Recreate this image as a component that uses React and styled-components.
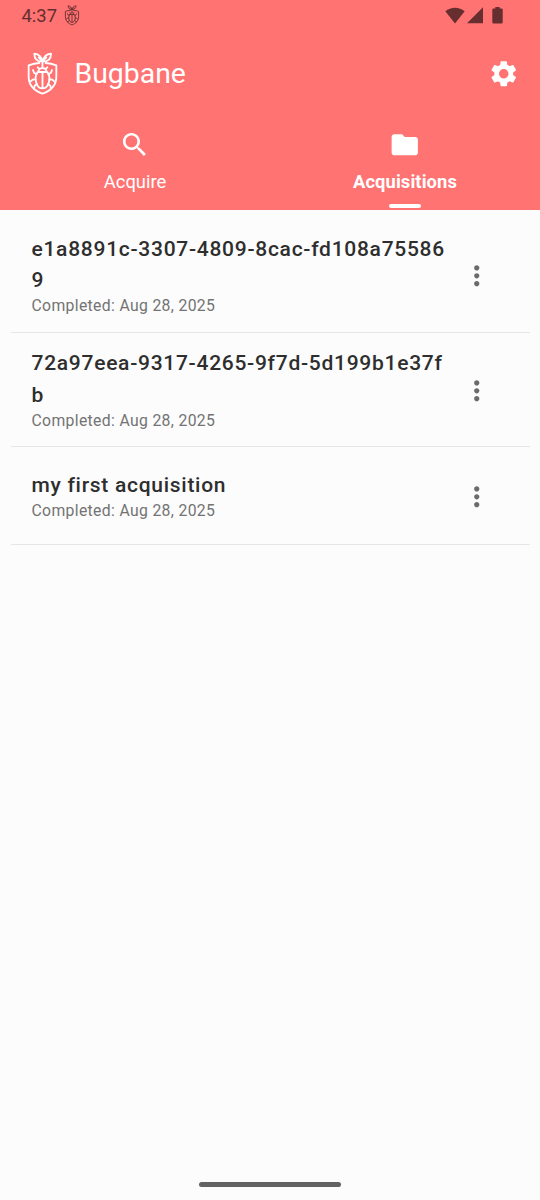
import React from "react";
import styled, { createGlobalStyle } from "styled-components";

const GlobalStyle = createGlobalStyle`
  * { box-sizing: border-box; }
  body {
    margin: 0;
    background: #fcfcfc;
    font-family: Roboto, "Liberation Sans", sans-serif;
  }
`;

const Screen = styled.div`
  display: flex;
  flex-direction: column;
  width: 540px;
  height: 1200px;
  background: #fcfcfc;
  overflow: hidden;
`;

const Header = styled.header`
  display: flex;
  flex-direction: column;
  height: 210px;
  background: #ff7373;
  color: #fff;
`;

const StatusBar = styled.div`
  display: flex;
  align-items: center;
  justify-content: space-between;
  height: 31px;
  padding: 0 37px 0 21.5px;
  color: #662e2e;
`;

const StatusGroup = styled.div`
  display: flex;
  align-items: center;
  gap: ${(p) => p.$gap}px;
`;

const Clock = styled.span`
  font-size: 18.4px;
  line-height: 31px;
`;

const BatterySlot = styled.span`
  display: flex;
  margin-left: 7.5px;
`;

const AppBar = styled.div`
  display: flex;
  align-items: center;
  height: 85px;
  padding: 0 21px 0 26px;
`;

const AppTitle = styled.h1`
  flex: 1;
  margin: 0 0 0 15.5px;
  font-size: 28.4px;
  font-weight: 400;
  line-height: 36px;
`;

const IconButton = styled.button`
  display: flex;
  padding: 0;
  border: 0;
  background: none;
  color: ${(p) => p.$color};
`;

const Tabs = styled.nav`
  display: flex;
  flex: 1;
`;

const Tab = styled.button`
  display: flex;
  flex: 1;
  flex-direction: column;
  align-items: center;
  padding: 13px 0 0;
  border: 0;
  background: none;
  color: #fff;
  font-family: inherit;
  font-size: 18.375px;
  font-weight: ${(p) => (p.$active ? 700 : 400)};
  line-height: 26px;
  letter-spacing: ${(p) => (p.$active ? 0.1 : 0)}px;
`;

const TabLabel = styled.span`
  margin-top: 8px;
`;

const Indicator = styled.span`
  width: 32px;
  height: 4px;
  margin-top: 9.5px;
  border-radius: 2px;
  background: #fff;
`;

const List = styled.ul`
  flex: 1;
  margin: 0;
  padding: 8.6px 10.5px 0;
  list-style: none;
`;

const Row = styled.li`
  display: flex;
  align-items: center;
  min-height: 98px;
  padding: 15.4px 36.8px 14px 21px;
  border-bottom: 1.3px solid #e6e6e6;
`;

const RowText = styled.div`
  flex: 1;
  min-width: 0;
  padding-right: 12px;
`;

const RowTitle = styled.div`
  color: #2e2e2e;
  font-size: 21px;
  font-weight: 500;
  line-height: 31.5px;
  letter-spacing: 0.72px;
  word-break: break-all;
`;

const RowDate = styled.div`
  margin: -1.8px 0 1.8px;
  color: #737373;
  font-size: 15.75px;
  line-height: 21px;
  letter-spacing: 0.34px;
`;

const HomeArea = styled.footer`
  display: flex;
  justify-content: center;
  height: 18px;
`;

const HomeHandle = styled.div`
  width: 142px;
  height: 5px;
  border-radius: 2.5px;
  background: #636363;
`;

const MaterialIcon = ({ d }) => (
  <svg width="31.5" height="31.5" viewBox="0 0 24 24" fill="currentColor">
    <path d={d} />
  </svg>
);

const paths = {
  settings:
    "M19.14 12.94c.04-.3.06-.61.06-.94 0-.32-.02-.64-.07-.94l2.03-1.58c.18-.14.23-.41.12-.61l-1.92-3.32c-.12-.22-.37-.29-.59-.22l-2.39.96c-.5-.38-1.03-.7-1.62-.94l-.36-2.54c-.04-.24-.24-.41-.48-.41h-3.84c-.24 0-.43.17-.47.41l-.36 2.54c-.59.24-1.13.57-1.62.94l-2.39-.96c-.22-.08-.47 0-.59.22L2.74 8.87c-.12.21-.08.47.12.61l2.03 1.58c-.05.3-.09.63-.09.94s.02.64.07.94l-2.03 1.58c-.18.14-.23.41-.12.61l1.92 3.32c.12.22.37.29.59.22l2.39-.96c.5.38 1.03.7 1.62.94l.36 2.54c.05.24.24.41.48.41h3.84c.24 0 .44-.17.47-.41l.36-2.54c.59-.24 1.13-.56 1.62-.94l2.39.96c.22.08.47 0 .59-.22l1.92-3.32c.12-.22.07-.47-.12-.61l-2.01-1.58zM12 15.6c-1.98 0-3.6-1.62-3.6-3.6s1.62-3.6 3.6-3.6 3.6 1.62 3.6 3.6-1.62 3.6-3.6 3.6z",
  search:
    "M15.5 14h-.79l-.28-.27C15.41 12.59 16 11.11 16 9.5 16 5.91 13.09 3 9.5 3S3 5.91 3 9.5 5.91 16 9.5 16c1.61 0 3.09-.59 4.23-1.57l.27.28v.79l5 4.99L20.49 19l-4.99-5zm-6 0C7.01 14 5 11.99 5 9.5S7.01 5 9.5 5 14 7.01 14 9.5 11.99 14 9.5 14z",
  folder:
    "M10 4H4c-1.1 0-1.99.9-1.99 2L2 18c0 1.1.9 2 2 2h16c1.1 0 2-.9 2-2V8c0-1.1-.9-2-2-2h-8l-2-2z",
  more:
    "M12 8c1.1 0 2-.9 2-2s-.9-2-2-2-2 .9-2 2 .9 2 2 2zm0 2c-1.1 0-2 .9-2 2s.9 2 2 2 2-.9 2-2-.9-2-2-2zm0 6c-1.1 0-2 .9-2 2s.9 2 2 2 2-.9 2-2-.9-2-2-2z",
};

const BugLogo = ({ width, height, stroke }) => (
  <svg
    width={width}
    height={height}
    viewBox="0 0 99 132"
    fill="none"
    stroke="currentColor"
    strokeWidth={stroke}
    strokeLinecap="round"
    strokeLinejoin="round"
  >
    <path d="M40 33Q24 34 8 40v34c0 26 17 42 41.500 51C74 116 91 100 91 74V40Q75 34 59 33" />
    <path d="M49.500 46V29C46 12 36 6 25 5c0 15 8 24 24.500 24C53 12 63 6 75 5c0 15-9 24-25.500 24M38 16l11.500 13L61 16" />
    <path d="M37 59c2-14 23-14 25 0M35 60h29c13 18 4 49-14.500 49S22 78 35 60ZM49.500 62v46M35 46l6 5M64 46l-6 5" />
    <path d="M32 67 24 62 21 54M67 67l8-5 3-8M29 82l-9 1-7 6M70 82l9 1 7 6M33 96l-7 5-2 9M66 96l7 5 2 9" />
  </svg>
);

const WifiIcon = () => (
  <svg width="20" height="17" viewBox="0 0 20 17" fill="currentColor">
    <path d="M.3 4.300C5.800-.6 14.200-.6 19.700 4.300L10 16.500Z" />
  </svg>
);

const SignalIcon = () => (
  <svg width="16" height="17" viewBox="0 0 16 17" fill="currentColor">
    <path d="M16 .3v16H0z" />
  </svg>
);

const BatteryIcon = () => (
  <svg width="11" height="17" viewBox="0 0 11 17" fill="currentColor">
    <path d="M3.300 0h4.400v1.600h1.800q1.200 0 1.200 1.200v12.500q0 1.200-1.200 1.200h-8q-1.200 0-1.200-1.200V2.800q0-1.200 1.200-1.200h1.800z" />
  </svg>
);

const acquisitions = [
  { name: "e1a8891c-3307-4809-8cac-fd108a755869", date: "Aug 28, 2025" },
  { name: "72a97eea-9317-4265-9f7d-5d199b1e37fb", date: "Aug 28, 2025" },
  { name: "my first acquisition", date: "Aug 28, 2025" },
];

export default function App() {
  return (
    <Screen>
      <GlobalStyle />
      <Header>
        <StatusBar>
          <StatusGroup $gap={7}>
            <Clock>4:37</Clock>
            <BugLogo width={16} height={21} stroke={5.5} />
          </StatusGroup>
          <StatusGroup $gap={2}>
            <WifiIcon />
            <SignalIcon />
            <BatterySlot>
              <BatteryIcon />
            </BatterySlot>
          </StatusGroup>
        </StatusBar>
        <AppBar>
          <BugLogo width={33} height={44} stroke={5.5} />
          <AppTitle>Bugbane</AppTitle>
          <IconButton $color="#fff" aria-label="Settings">
            <MaterialIcon d={paths.settings} />
          </IconButton>
        </AppBar>
        <Tabs>
          <Tab>
            <MaterialIcon d={paths.search} />
            <TabLabel>Acquire</TabLabel>
          </Tab>
          <Tab $active>
            <MaterialIcon d={paths.folder} />
            <TabLabel>Acquisitions</TabLabel>
            <Indicator />
          </Tab>
        </Tabs>
      </Header>
      <List>
        {acquisitions.map((item) => (
          <Row key={item.name}>
            <RowText>
              <RowTitle>{item.name}</RowTitle>
              <RowDate>Completed: {item.date}</RowDate>
            </RowText>
            <IconButton $color="#6b6b6b" aria-label="More options">
              <MaterialIcon d={paths.more} />
            </IconButton>
          </Row>
        ))}
      </List>
      <HomeArea>
        <HomeHandle />
      </HomeArea>
    </Screen>
  );
}
